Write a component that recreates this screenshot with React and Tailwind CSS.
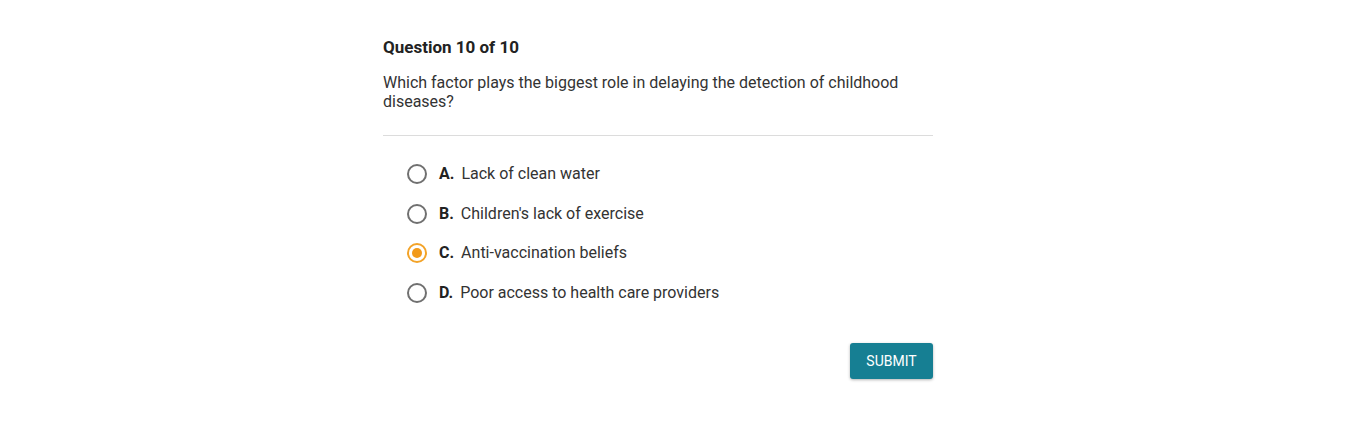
import React from "react";

const options = [
  { key: "A", text: "Lack of clean water" },
  { key: "B", text: "Children's lack of exercise" },
  { key: "C", text: "Anti-vaccination beliefs" },
  { key: "D", text: "Poor access to health care providers" },
];

export default function App() {
  const selected = "C";
  return (
    <div className="w-[1366px] h-[428px] bg-white flex justify-center" style={{ fontFamily: "Roboto, 'Liberation Sans', sans-serif" }}>
      <div className="w-[550px] pt-[37px] mr-[50px]">
        <div className="text-[17px] leading-[20px] font-bold text-[#222]">Question 10 of 10</div>
        <div className="mt-[16px] text-[16px] leading-[19px] text-[#333]">
          Which factor plays the biggest role in delaying the detection of childhood diseases?
        </div>
        <div className="mt-[24px] h-px bg-[#dcdcdc]" />
        <div className="pt-[18px] pl-[24px] flex flex-col">
          {options.map((o) => {
            const on = o.key === selected;
            return (
              <div key={o.key} className="h-[39.7px] flex items-center">
                <div
                  className={
                    on
                      ? "w-[20px] h-[20px] rounded-full border-2 border-[#f3a328] flex items-center justify-center"
                      : "w-[20px] h-[20px] rounded-full border-2 border-[#707070]"
                  }
                >
                  {on && <div className="w-[10px] h-[10px] rounded-full bg-[#f29a1a]" />}
                </div>
                <span className="ml-[12px] text-[16px] font-bold text-[#222]">{o.key}.</span>
                <span className="ml-[7px] text-[16px] text-[#333]">{o.text}</span>
              </div>
            );
          })}
        </div>
        <div className="mt-[30px] flex justify-end">
          <button className="w-[83px] h-[36px] pt-[1px] rounded-[3px] bg-[#167f93] text-white text-[14px] font-normal shadow-[0_1px_3px_rgba(0,0,0,0.3)]">
            SUBMIT
          </button>
        </div>
      </div>
    </div>
  );
}
